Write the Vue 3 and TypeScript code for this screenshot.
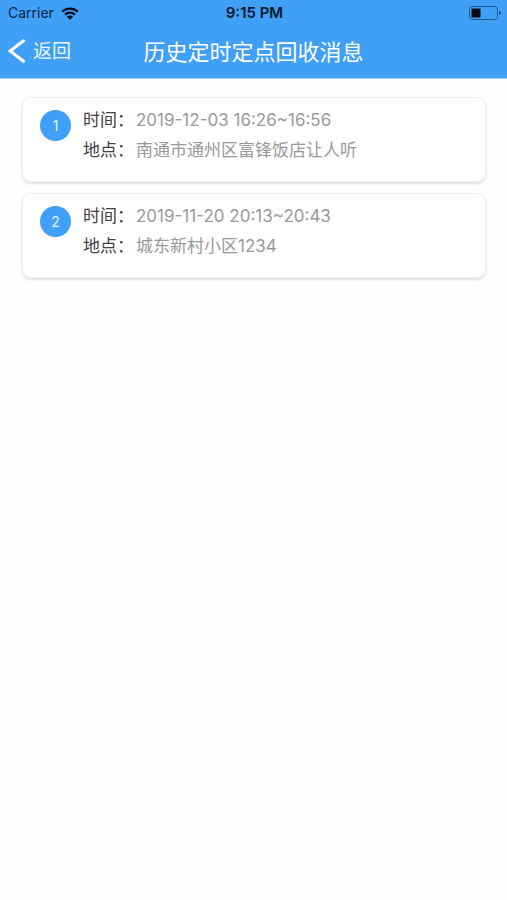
<script setup lang="ts">
interface RecycleMessage {
  id: number
  time: string
  place: string
}

const messages: RecycleMessage[] = [
  { id: 1, time: '2019-12-03 16:26~16:56', place: '南通市通州区富锋饭店让人听' },
  { id: 2, time: '2019-11-20 20:13~20:43', place: '城东新村小区1234' },
]

function goBack(): void {
  window.history.back()
}
</script>

<template>
  <div class="screen">
    <header class="header">
      <div class="status">
        <div class="carrier">
          <span>Carrier</span>
          <svg class="wifi" viewBox="0 0 18 13" aria-hidden="true">
            <path d="M1.2 4.7a11.2 11.2 0 0 1 15.6 0M4 7.6a7.2 7.2 0 0 1 10 0" fill="none" stroke="currentColor" stroke-width="2.2" />
            <path d="M9 12.8 5.9 9.7a4.4 4.4 0 0 1 6.2 0z" fill="currentColor" />
          </svg>
        </div>
        <span class="clock">9:15 PM</span>
        <svg class="battery" viewBox="0 0 32 14" aria-hidden="true">
          <rect x="0.5" y="0.5" width="28" height="13" rx="3" fill="none" stroke="#1d578c" />
          <rect x="2.5" y="2.5" width="9" height="9" rx="0.6" fill="#020a14" />
          <path d="M30 4.8q2 .8 2 2.2t-2 2.2z" fill="#1d578c" />
        </svg>
      </div>
      <nav class="nav">
        <button class="back" type="button" @click="goBack">
          <svg class="chevron" viewBox="0 0 18 24" aria-hidden="true">
            <path d="M15.5 1.8 2.2 12l13.3 10.2" fill="none" stroke="currentColor" stroke-width="3" stroke-linecap="round" stroke-linejoin="miter" />
          </svg>
          <span>返回</span>
        </button>
        <h1 class="title">历史定时定点回收消息</h1>
      </nav>
    </header>

    <main>
      <ol class="list">
        <li v-for="message in messages" :key="message.id" class="card">
          <span class="badge">{{ message.id }}</span>
          <dl class="details">
            <div class="row">
              <dt>时间：</dt>
              <dd>{{ message.time }}</dd>
            </div>
            <div class="row">
              <dt>地点：</dt>
              <dd>{{ message.place }}</dd>
            </div>
          </dl>
        </li>
      </ol>
    </main>
  </div>
</template>

<style>
body {
  margin: 0;
  background: #fefefe;
}
</style>

<style scoped>
.screen {
  min-height: 100vh;
  font-family: Inter, "Noto Sans CJK SC", sans-serif;
  background: #fefefe;
}

.header {
  color: #fff;
  background: #409ff6;
  border-bottom: 1px solid #a9d2fa;
}

.status {
  display: grid;
  grid-template-columns: 1fr auto 1fr;
  align-items: center;
  height: 26px;
  padding: 0 6px 0 8px;
  font-size: 14px;
  line-height: 20px;
  color: #0a2440;
}

.carrier {
  display: flex;
  align-items: center;
  gap: 7px;
}

.wifi {
  width: 18px;
  height: 13px;
  color: #04101e;
}

.clock {
  font-size: 15px;
  font-weight: 600;
  color: #06182c;
}

.battery {
  justify-self: end;
  width: 32px;
  height: 14px;
}

.nav {
  display: grid;
  grid-template-columns: 1fr auto 1fr;
  align-items: center;
  height: 52px;
  padding: 0 8px;
}

.back {
  display: flex;
  align-items: center;
  justify-self: start;
  gap: 7px;
  padding: 0;
  border: 0;
  font: inherit;
  font-size: 19px;
  line-height: 28px;
  color: #e8f5ff;
  background: none;
  cursor: pointer;
}

.chevron {
  width: 18px;
  height: 24px;
  margin-bottom: 2px;
  color: #fff;
}

.title {
  margin: 0;
  font-size: 22px;
  font-weight: 400;
  line-height: 32px;
}

.list {
  display: flex;
  flex-direction: column;
  gap: 11px;
  margin: 0;
  padding: 18px 21px 18px 22px;
  list-style: none;
}

.card {
  display: flex;
  align-items: flex-start;
  gap: 12px;
  padding: 7px 17px 16px;
  border: 1px solid #f0f0f0;
  border-radius: 9px;
  background: #fff;
  box-shadow: 0 2px 3px rgba(0, 0, 0, 0.12);
}

.badge {
  flex: none;
  width: 31px;
  height: 31px;
  margin-top: 5px;
  border-radius: 50%;
  font-size: 14px;
  line-height: 31px;
  text-align: center;
  color: #e4f3ff;
  background: #409ff6;
}

.details {
  flex: 1;
  margin: 0;
  font-size: 17px;
  line-height: 30px;
}

.row {
  display: flex;
  gap: 2px;
}

dt {
  flex: none;
  color: #404040;
}

dd {
  margin: 0;
  color: #999;
}
</style>
